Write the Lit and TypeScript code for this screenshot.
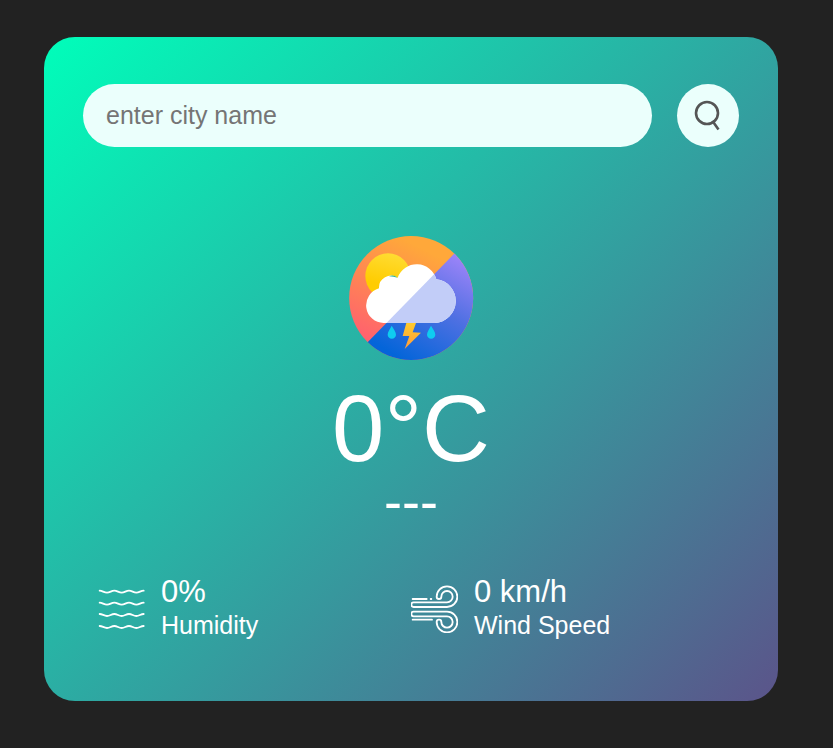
import { LitElement, html, css, svg } from "lit";
import { customElement, property, state } from "lit/decorators.js";

const searchIcon = svg`
  <circle cx="30" cy="29" r="11" />
  <path d="M35.5 37 41.5 45.500" />
`;

const humidityIcon = html`
  <svg class="icon" viewBox="24 45 141 144" aria-hidden="true">
    ${[62, 98, 132, 168].map(
      (y) => svg`<path d="M29 ${y}c8 0 13 6 22 6s13-6 22-6 13 6 22 6 13-6 22-6 13 6 22 6 13-6 22-6" />`
    )}
  </svg>
`;

const windIcon = html`
  <svg class="icon" viewBox="15 15 141 144" aria-hidden="true">
    <path d="M20 57H62M74 57h2M20 119H78" />
    <path d="M123 67H23a7 7 0 0 0 0 14H123A31 31 0 1 0 92 50a7 7 0 0 0 14 0A17 17 0 1 1 123 67Z" />
    <path d="M123 109H23a7 7 0 0 1 0-14H123A31 31 0 1 1 92 126a7 7 0 0 1 14 0A17 17 0 1 0 123 109Z" />
  </svg>
`;

@customElement("weather-icon")
class WeatherIcon extends LitElement {
  static styles = css`
    :host { display: block; width: 126px; height: 126px; }
    .art { display: block; width: 100%; height: 100%; }
  `;

  render() {
    return html`
      <svg class="art" viewBox="24 21 378 378" role="img" aria-label="Sun, rain and thunder">
        <defs>
          <linearGradient id="day" x1="0.6" y1="0" x2="0.15" y2="0.9">
            <stop offset="0.1" stop-color="#ffa83a" />
            <stop offset="1" stop-color="#ff5c72" />
          </linearGradient>
          <linearGradient id="night" x1="0.95" y1="0.15" x2="0.45" y2="1">
            <stop offset="0" stop-color="#a586fb" />
            <stop offset="0.5" stop-color="#4e70e2" />
            <stop offset="1" stop-color="#0465d9" />
          </linearGradient>
          <linearGradient id="sun" x1="0.6" y1="0" x2="0.4" y2="1">
            <stop offset="0" stop-color="#ffdc32" />
            <stop offset="0.7" stop-color="#ffcc00" />
          </linearGradient>
          <linearGradient id="bolt" x1="0" y1="0" x2="0" y2="1">
            <stop offset="0" stop-color="#ffcb2b" />
            <stop offset="1" stop-color="#ff9b3c" />
          </linearGradient>
          <clipPath id="disc"><circle cx="213.5" cy="210" r="186" /></clipPath>
          <clipPath id="lower"><path d="M420 -2 20 407H420Z" /></clipPath>
          <clipPath id="cloud">
            <path d="M131 285A53 53 0 0 1 117 181A36 36 0 0 1 173 149A61 61 0 0 1 289 153.500A66 66 0 0 1 284 285Z" />
          </clipPath>
        </defs>
        <g clip-path="url(#disc)">
          <rect x="24" y="21" width="378" height="378" fill="url(#day)" />
          <rect x="24" y="21" width="378" height="378" fill="url(#night)" clip-path="url(#lower)" />
        </g>
        <circle cx="144" cy="144" r="68" fill="url(#sun)" />
        <g clip-path="url(#cloud)">
          <rect x="70" y="100" width="290" height="190" fill="#fff" />
          <rect x="70" y="100" width="290" height="190" fill="#c2cdf8" clip-path="url(#lower)" />
        </g>
        <path d="M147 145Q160 138 173 149Q160 146 147 145Z" fill="#2fb79d" />
        <path d="M199 285H228L218 313 243 314 194 363 208 324H188Z" fill="url(#bolt)" />
        <path d="M155 293C160 303 168 310 168 320a12.500 12.500 0 0 1-25 0C143 310 151 303 155 293Z" fill="#0fccf0" />
        <path d="M273 293C278 303 286 310 286 320a12.500 12.500 0 0 1-25 0C261 310 269 303 273 293Z" fill="#0fccf0" />
      </svg>
    `;
  }
}

@customElement("weather-stat")
class WeatherStat extends LitElement {
  @property() value = "";
  @property() label = "";

  static styles = css`
    :host { display: flex; align-items: center; gap: 16px; }
    .text { padding-bottom: 4px; }
    .value, .label { margin: 0; white-space: nowrap; }
    .value { font-size: 31px; line-height: 36px; }
    .label { font-size: 25px; line-height: 30px; }
  `;

  render() {
    return html`
      <slot></slot>
      <div class="text">
        <p class="value">${this.value}</p>
        <p class="label">${this.label}</p>
      </div>
    `;
  }
}

@customElement("app-root")
class AppRoot extends LitElement {
  @state() private temperature = 0;
  @state() private city = "---";
  @state() private humidity = 0;
  @state() private wind = 0;

  static styles = css`
    :host {
      display: block;
      box-sizing: border-box;
      min-height: 100vh;
      padding: 37px 55px 47px 44px;
      background: #222;
      color: #fff;
      font-family: "Liberation Sans", Arial, sans-serif;
    }
    .card {
      padding: 47px 39px 57px;
      border-radius: 31px;
      background: linear-gradient(135deg, #00feba, #5b548a);
    }
    .search { display: flex; gap: 25px; }
    .field, .submit {
      box-sizing: border-box;
      height: 63px;
      border: 0;
      background: #ebfffc;
      color: #555;
      font: inherit;
    }
    .field {
      flex: 1;
      min-width: 0;
      padding: 0 23px;
      border-radius: 32px;
      font-size: 25px;
      outline: none;
    }
    .field::placeholder { color: #757575; }
    .submit { width: 62px; padding: 0; border-radius: 50%; cursor: pointer; }
    .glass { display: block; width: 100%; height: 100%; fill: none; stroke: #555; stroke-width: 2.6; }
    .weather { display: flex; flex-direction: column; align-items: center; padding-top: 88px; }
    .temp, .city { margin: 0; font-weight: 500; }
    .temp { margin-top: 23px; font-size: 94px; line-height: 90px; }
    .city { font-size: 54px; line-height: 54px; }
    .details {
      display: grid;
      grid-template-columns: 1fr 1fr;
      margin-top: 46px;
      padding: 0 15px;
    }
    .icon {
      flex: none;
      width: 47px;
      height: 48px;
      fill: none;
      stroke: #fff;
      stroke-width: 5.5;
      stroke-linecap: round;
    }
  `;

  private submit(e: Event) {
    e.preventDefault();
  }

  render() {
    return html`
      <main class="card">
        <form class="search" @submit=${this.submit}>
          <input class="field" type="text" placeholder="enter city name" aria-label="City name" spellcheck="false" />
          <button class="submit" type="submit" aria-label="Search">
            <svg class="glass" viewBox="0 0 62 63" aria-hidden="true">${searchIcon}</svg>
          </button>
        </form>
        <section class="weather">
          <weather-icon></weather-icon>
          <h1 class="temp">${this.temperature}°C</h1>
          <h2 class="city">${this.city}</h2>
        </section>
        <section class="details">
          <weather-stat value="${this.humidity}%" label="Humidity">${humidityIcon}</weather-stat>
          <weather-stat value="${this.wind} km/h" label="Wind Speed">${windIcon}</weather-stat>
        </section>
      </main>
    `;
  }
}
